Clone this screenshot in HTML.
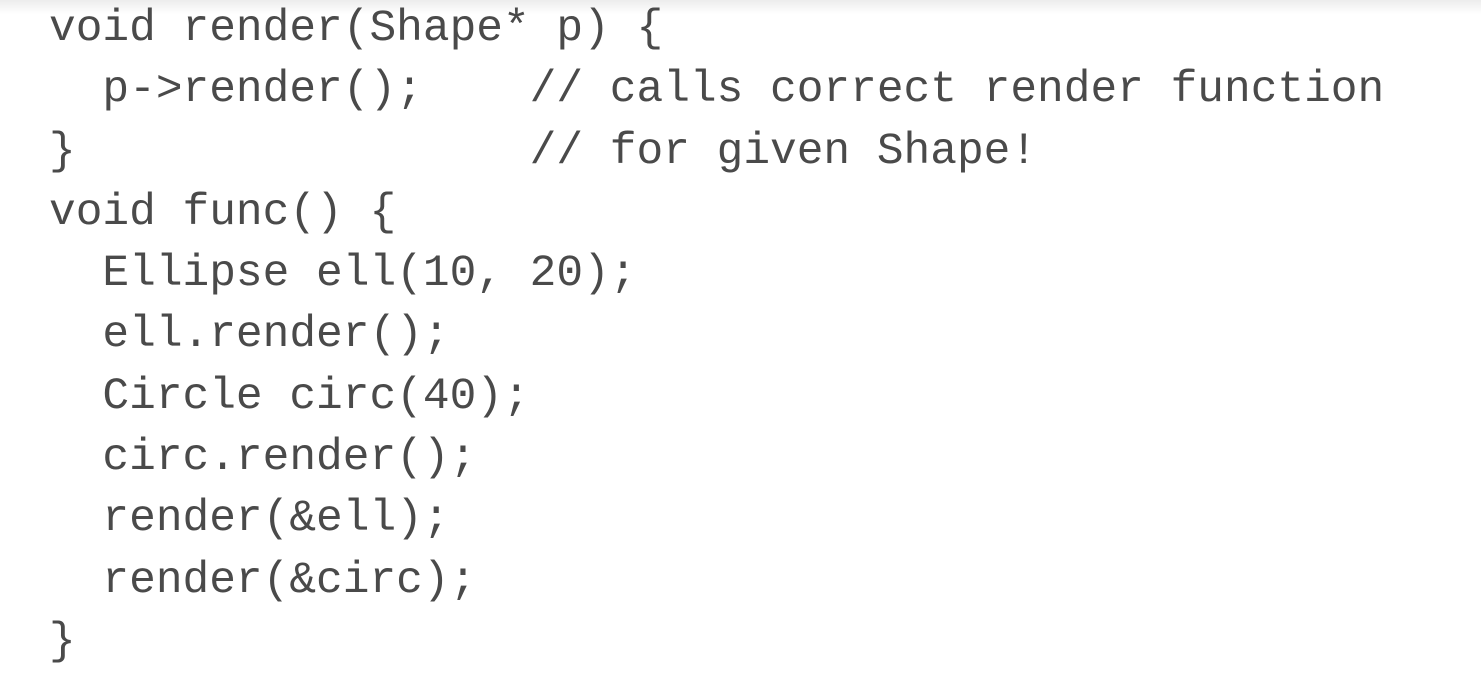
<!DOCTYPE html>
<html><head><meta charset="utf-8"><style>
html,body{margin:0;padding:0;background:#fff;width:1481px;height:657px;overflow:hidden}
body{background:linear-gradient(#ececec 0px,#fff 14px)}
pre{margin:0;position:absolute;left:49px;top:-1px;font-family:"Liberation Mono",monospace;font-size:44.5px;line-height:61.3px;color:#4a4a4a;letter-spacing:0}
</style></head><body>
<pre>void render(Shape* p) {
  p-&gt;render();    // calls correct render function
}                 // for given Shape!
void func() {
  Ellipse ell(10, 20);
  ell.render();
  Circle circ(40);
  circ.render();
  render(&amp;ell);
  render(&amp;circ);
}</pre>
</body></html>
